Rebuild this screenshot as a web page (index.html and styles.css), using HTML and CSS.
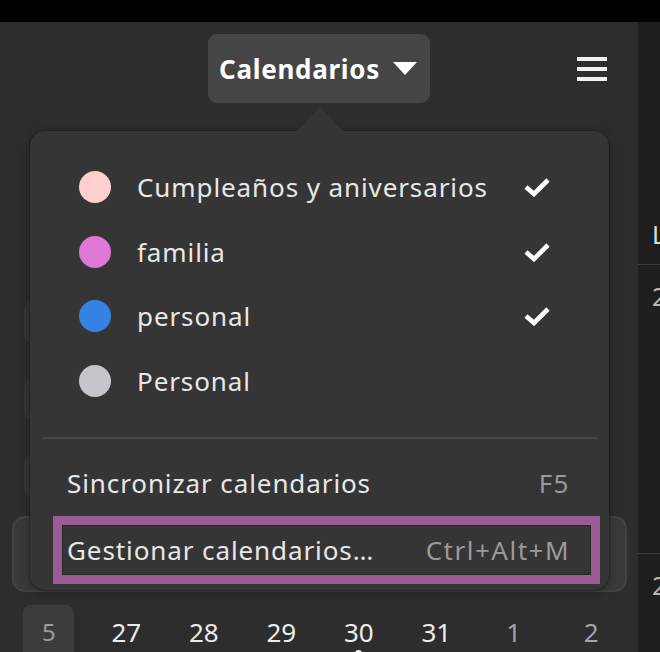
FILE: index.html
```html
<!DOCTYPE html>
<html lang="es">
<head>
<meta charset="utf-8">
<title>Calendarios</title>
<link rel="stylesheet" href="styles.css">
</head>
<body>
<div class="topbar"></div>
<div class="main">
  <aside class="sidebar">
    <header class="sb-header">
      <button class="cal-btn">
        <span class="cal-btn-label">Calendarios</span>
        <svg class="caret" width="24" height="13" viewBox="0 0 24 13"><polygon points="0,0 24,0 12,13" fill="#ffffff"/></svg>
      </button>
      <div class="hamburger"><span></span><span></span><span></span></div>
    </header>
    <div class="sb-cards">
      <div class="card"></div>
      <div class="card"></div>
      <div class="card"></div>
      <div class="card big"></div>
    </div>
    <div class="week">
      <div class="wk">5</div>
      <div class="day">27</div>
      <div class="day">28</div>
      <div class="day">29</div>
      <div class="day today">30</div>
      <div class="day">31</div>
      <div class="day other">1</div>
      <div class="day other">2</div>
    </div>

    <div class="popover">
      <div class="pop-arrow"></div>
      <ul class="cal-list">
        <li class="cal-row"><span class="dot pink"></span><span class="cal-name">Cumpleaños y aniversarios</span><svg class="check" width="28" height="20" viewBox="0 0 28 20"><path d="M3 10 L11 17 L25 3" fill="none" stroke="#ffffff" stroke-width="4.6"/></svg></li>
        <li class="cal-row"><span class="dot magenta"></span><span class="cal-name">familia</span><svg class="check" width="28" height="20" viewBox="0 0 28 20"><path d="M3 10 L11 17 L25 3" fill="none" stroke="#ffffff" stroke-width="4.6"/></svg></li>
        <li class="cal-row"><span class="dot blue"></span><span class="cal-name">personal</span><svg class="check" width="28" height="20" viewBox="0 0 28 20"><path d="M3 10 L11 17 L25 3" fill="none" stroke="#ffffff" stroke-width="4.6"/></svg></li>
        <li class="cal-row"><span class="dot grey"></span><span class="cal-name">Personal</span></li>
      </ul>
      <div class="separator"></div>
      <div class="menu">
        <div class="menu-item"><span>Sincronizar calendarios</span><span class="accel">F5</span></div>
        <div class="menu-item highlighted"><span>Gestionar calendarios…</span><span class="accel">Ctrl+Alt+M</span></div>
      </div>
    </div>
  </aside>
  <section class="pane">
    <div class="pane-head">L</div>
    <div class="pane-cell">2</div>
    <div class="pane-cell">2</div>
  </section>
</div>
</body>
</html>
```

FILE: styles.css
```css
* { box-sizing: border-box; }

html, body {
  margin: 0;
  padding: 0;
}

body {
  width: 660px;
  height: 652px;
  overflow: hidden;
  background: #1e1e1e;
  font-family: "Noto Sans", "Open Sans", sans-serif;
  color: #e8e8e8;
}

.topbar {
  height: 22px;
  background: #000000;
}

.main {
  display: flex;
  height: 630px;
}

.sidebar {
  position: relative;
  width: 638px;
  flex: none;
  background: #2d2d2d;
  display: flex;
  flex-direction: column;
}

.sb-header {
  height: 93px;
  display: grid;
  grid-template-columns: 1fr auto 1fr;
  align-items: start;
}

.cal-btn {
  grid-column: 2;
  margin-top: 12px;
  height: 69px;
  padding: 0 13px 0 11px;
  display: flex;
  align-items: center;
  gap: 13px;
  background: #454545;
  border: none;
  border-radius: 9px;
  color: #ffffff;
  font-family: inherit;
  font-size: 26px;
  font-weight: 700;
  letter-spacing: 0.7px;
}

.caret { display: block; }

.hamburger {
  grid-column: 3;
  justify-self: end;
  margin: 35px 31px 0 0;
  display: flex;
  flex-direction: column;
  gap: 6px;
}

.hamburger span {
  display: block;
  width: 30px;
  height: 4px;
  background: #f2f2f2;
}

.sb-cards {
  padding-top: 185px;
  display: flex;
  flex-direction: column;
}

.card {
  height: 44px;
  margin: 0 40px 33px 24px;
  background: #353535;
  border-radius: 10px;
}

.card:nth-child(3) { margin-bottom: 18px; }

.card.big {
  height: 76px;
  margin: 0 11px 0 12px;
  background: #393939;
  border: 2px solid #434343;
  border-radius: 13px;
}

.week {
  margin-top: 13px;
  padding-left: 10px;
  display: grid;
  grid-template-columns: repeat(8, 77.5px);
  align-items: start;
  font-size: 26px;
}

.week > div {
  height: 47px;
  padding-top: 6px;
  display: flex;
  align-items: center;
  justify-content: center;
  position: relative;
}

.wk {
  width: 51px;
  justify-self: center;
  background: #3c3c3c;
  border-radius: 8px 8px 0 0;
  color: #9a9a9a;
  font-size: 24px;
}

.day { color: #ececec; }
.day.other { color: #a4a4a4; }

.day.today::after {
  content: "";
  position: absolute;
  left: 50%;
  bottom: -5px;
  width: 7px;
  height: 7px;
  margin-left: -3.5px;
  border-radius: 50%;
  background: #ffffff;
}

/* Popover */
.popover {
  position: absolute;
  left: 30px;
  top: 109px;
  width: 579px;
  height: 459px;
  background: #353535;
  border-radius: 15px;
  box-shadow: 0 0 0 1px rgba(0,0,0,0.18), 0 2px 8px rgba(0,0,0,0.35);
  display: flex;
  flex-direction: column;
  letter-spacing: 0.9px;
}

.pop-arrow {
  position: absolute;
  left: 267px;
  top: -24px;
  width: 0;
  height: 0;
  border-left: 23px solid transparent;
  border-right: 23px solid transparent;
  border-bottom: 24px solid #353535;
}

.cal-list {
  list-style: none;
  margin: 0;
  padding: 24px 0 0 0;
}

.cal-row {
  height: 64.5px;
  display: flex;
  align-items: center;
  padding-left: 49px;
  padding-right: 58px;
  font-size: 26px;
  color: #e8e8e8;
}

.dot {
  width: 32px;
  height: 32px;
  border-radius: 50%;
  flex: none;
}

.dot.pink { background: #ffcfd0; }
.dot.magenta { background: #de78d6; }
.dot.blue { background: #3584e4; }
.dot.grey { background: #c3c6ca; }

.cal-name {
  margin-left: 26px;
}

.check {
  margin-left: auto;
  display: block;
}

.separator {
  height: 2px;
  margin: 24px 12px 0 13px;
  background: #464646;
}

.menu {
  margin-top: 11px;
  display: flex;
  flex-direction: column;
}

.menu-item {
  display: flex;
  align-items: center;
  justify-content: space-between;
  margin: 0 9px 0 23px;
  padding: 0 21px 0 5px;
  border: 9px solid transparent;
  font-size: 26px;
  color: #e8e8e8;
}

.menu-item:first-child { height: 66px; }

.menu-item.highlighted {
  height: 68px;
  border-color: #9b5c95;
  box-shadow: inset 0 0 0 1px #262626;
}

.accel {
  color: #9a9a9a;
  letter-spacing: 1.5px;
}

/* Right pane */
.pane {
  flex: 1;
  background: #1e1e1e;
  overflow: hidden;
  font-size: 25px;
  white-space: nowrap;
}

.pane-head {
  height: 242px;
  padding: 197px 0 0 14px;
  line-height: 30px;
  color: #dddddd;
}

.pane-cell {
  height: 289px;
  border-top: 1px solid #3c3c3c;
  padding: 16px 0 0 14px;
  line-height: 30px;
  color: #b8b8b8;
}
```
